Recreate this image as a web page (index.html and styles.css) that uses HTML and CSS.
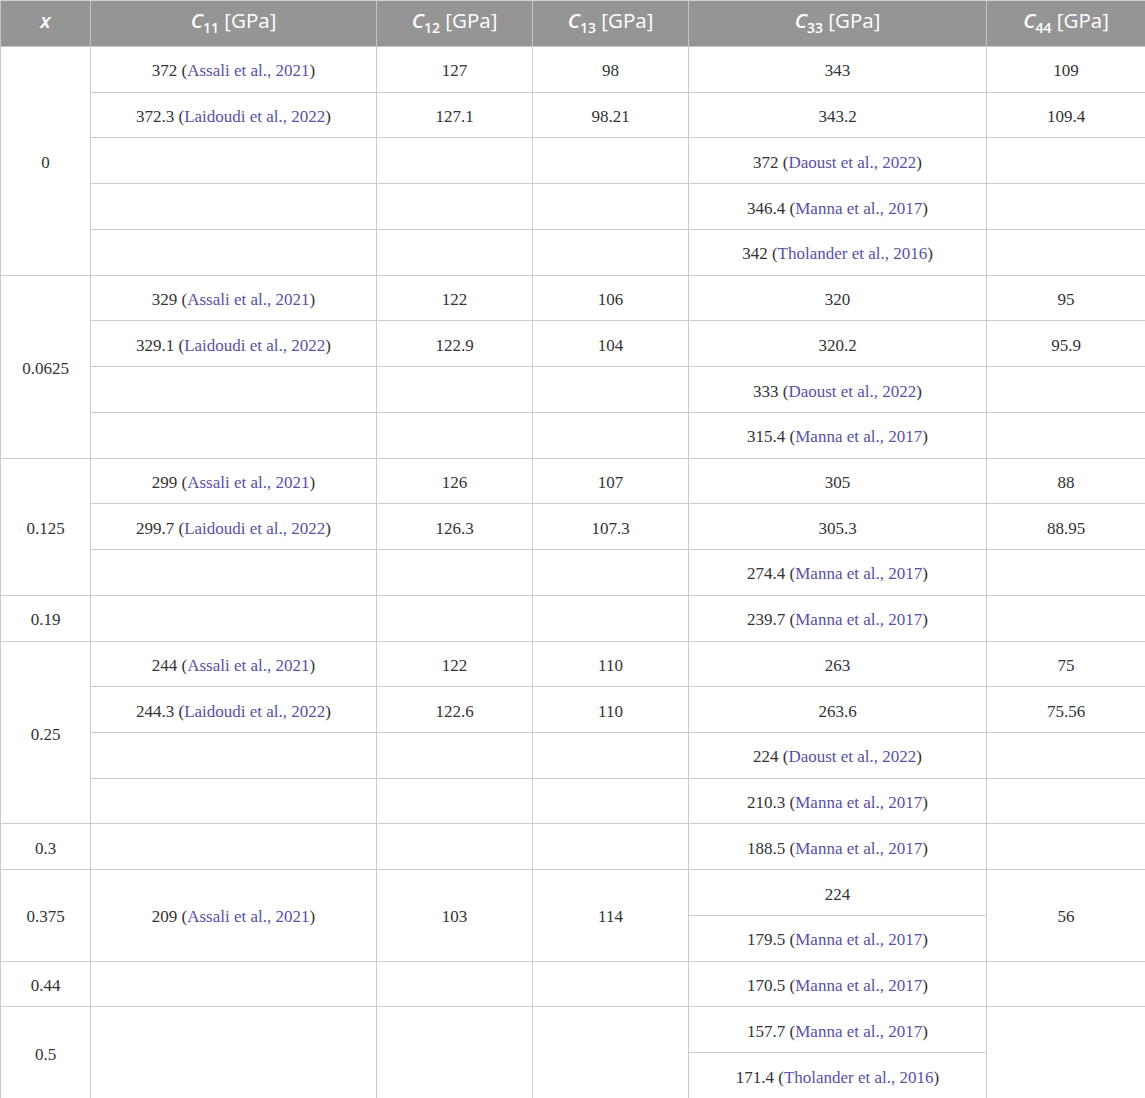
FILE: index.html
```html
<!DOCTYPE html>
<html>
<head>
<meta charset="utf-8">
<link rel="stylesheet" href="styles.css">
</head>
<body>
<table class="data">
<colgroup>
<col class="c-x"><col class="c-11"><col class="c-12"><col class="c-13"><col class="c-33"><col class="c-44">
</colgroup>
<thead>
<tr>
<th><span class="var">x</span></th>
<th><span class="var">C</span><sub>11</sub> [GPa]</th>
<th><span class="var">C</span><sub>12</sub> [GPa]</th>
<th><span class="var">C</span><sub>13</sub> [GPa]</th>
<th><span class="var">C</span><sub>33</sub> [GPa]</th>
<th><span class="var">C</span><sub>44</sub> [GPa]</th>
</tr>
</thead>
<tbody>
<tr><td rowspan="5">0</td><td>372 (<a>Assali et al., 2021</a>)</td><td>127</td><td>98</td><td>343</td><td>109</td></tr>
<tr><td>372.3 (<a>Laidoudi et al., 2022</a>)</td><td>127.1</td><td>98.21</td><td>343.2</td><td>109.4</td></tr>
<tr><td></td><td></td><td></td><td>372 (<a>Daoust et al., 2022</a>)</td><td></td></tr>
<tr><td></td><td></td><td></td><td>346.4 (<a>Manna et al., 2017</a>)</td><td></td></tr>
<tr><td></td><td></td><td></td><td>342 (<a>Tholander et al., 2016</a>)</td><td></td></tr>

<tr><td rowspan="4">0.0625</td><td>329 (<a>Assali et al., 2021</a>)</td><td>122</td><td>106</td><td>320</td><td>95</td></tr>
<tr><td>329.1 (<a>Laidoudi et al., 2022</a>)</td><td>122.9</td><td>104</td><td>320.2</td><td>95.9</td></tr>
<tr><td></td><td></td><td></td><td>333 (<a>Daoust et al., 2022</a>)</td><td></td></tr>
<tr><td></td><td></td><td></td><td>315.4 (<a>Manna et al., 2017</a>)</td><td></td></tr>

<tr><td rowspan="3">0.125</td><td>299 (<a>Assali et al., 2021</a>)</td><td>126</td><td>107</td><td>305</td><td>88</td></tr>
<tr><td>299.7 (<a>Laidoudi et al., 2022</a>)</td><td>126.3</td><td>107.3</td><td>305.3</td><td>88.95</td></tr>
<tr><td></td><td></td><td></td><td>274.4 (<a>Manna et al., 2017</a>)</td><td></td></tr>

<tr><td>0.19</td><td></td><td></td><td></td><td>239.7 (<a>Manna et al., 2017</a>)</td><td></td></tr>

<tr><td rowspan="4">0.25</td><td>244 (<a>Assali et al., 2021</a>)</td><td>122</td><td>110</td><td>263</td><td>75</td></tr>
<tr><td>244.3 (<a>Laidoudi et al., 2022</a>)</td><td>122.6</td><td>110</td><td>263.6</td><td>75.56</td></tr>
<tr><td></td><td></td><td></td><td>224 (<a>Daoust et al., 2022</a>)</td><td></td></tr>
<tr><td></td><td></td><td></td><td>210.3 (<a>Manna et al., 2017</a>)</td><td></td></tr>

<tr><td>0.3</td><td></td><td></td><td></td><td>188.5 (<a>Manna et al., 2017</a>)</td><td></td></tr>

<tr><td rowspan="2">0.375</td><td rowspan="2">209 (<a>Assali et al., 2021</a>)</td><td rowspan="2">103</td><td rowspan="2">114</td><td>224</td><td rowspan="2">56</td></tr>
<tr><td>179.5 (<a>Manna et al., 2017</a>)</td></tr>

<tr><td>0.44</td><td></td><td></td><td></td><td>170.5 (<a>Manna et al., 2017</a>)</td><td></td></tr>

<tr><td rowspan="2">0.5</td><td rowspan="2"></td><td rowspan="2"></td><td rowspan="2"></td><td>157.7 (<a>Manna et al., 2017</a>)</td><td rowspan="2"></td></tr>
<tr><td>171.4 (<a>Tholander et al., 2016</a>)</td></tr>
</tbody>
</table>
</body>
</html>
```

FILE: styles.css
```css
html, body {
  margin: 0;
  padding: 0;
  background: #ffffff;
}

.data {
  width: 1145px;
  border-collapse: collapse;
  table-layout: fixed;
}

.c-x { width: 90px; }
.c-11 { width: 286px; }
.c-12 { width: 156px; }
.c-13 { width: 156px; }
.c-33 { width: 298px; }
.c-44 { width: 159px; }

.data th {
  background: #959595;
  color: #ffffff;
  font-family: "Open Sans", "Noto Sans", sans-serif;
  font-weight: 400;
  font-size: 20.5px;
  height: 39px;
  padding: 0 4px 6px;
  text-align: center;
  vertical-align: middle;
  border: 1px solid #c4c4c4;
  border-top-color: #d0d0d0;
  line-height: 1;
}

.data th .var {
  font-style: italic;
  font-weight: 600;
}

.data th sub {
  font-size: 14px;
  font-weight: 600;
  vertical-align: -5px;
  line-height: 0;
}

.data td {
  font-family: "Liberation Serif", "Times New Roman", serif;
  font-size: 17px;
  color: #333333;
  text-align: center;
  vertical-align: middle;
  height: 41.74px;
  padding: 3px 4px 0;
  border: 1px solid #cccccc;
  line-height: 1;
}

.data td a {
  color: #5a4fa6;
  text-decoration: none;
}
```
